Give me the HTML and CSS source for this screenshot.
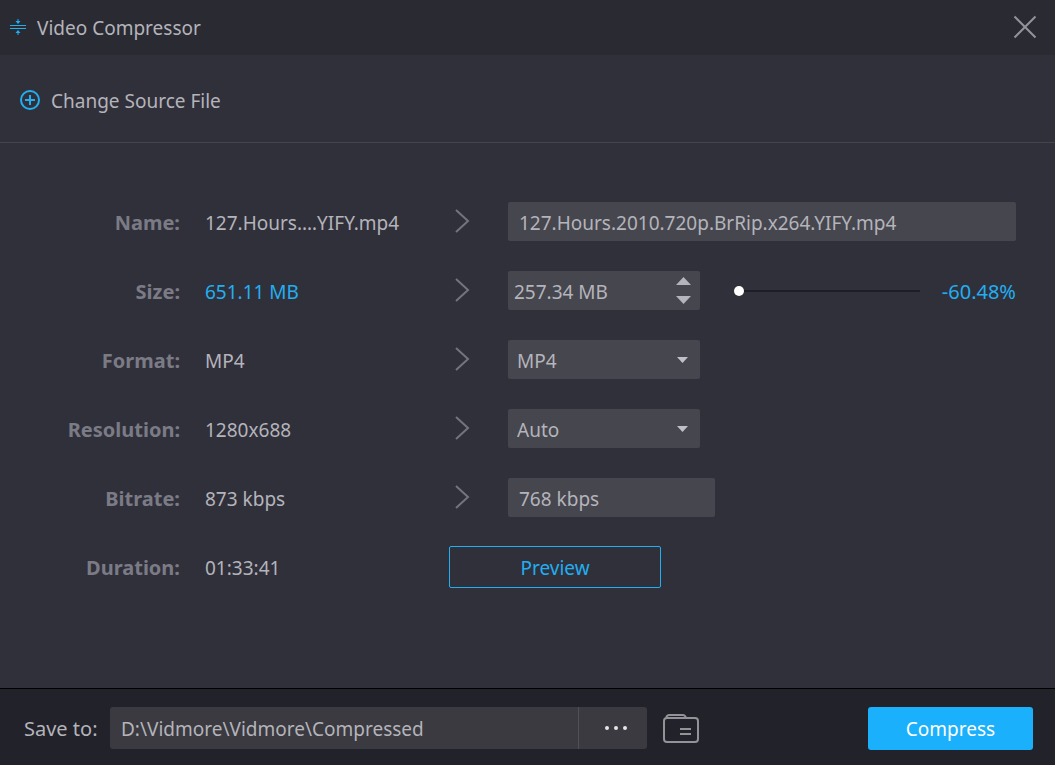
FILE: index.html
```html
<!DOCTYPE html>
<html lang="en">
<head>
    <meta charset="UTF-8">
    <meta name="viewport" content="width=device-width, initial-scale=1.0">
    <title>Video Compressor</title>
    <link rel="stylesheet" href="styles.css">
</head>
<body>
    <header class="titlebar">
        <svg class="logo" width="16" height="18" viewBox="0 0 16 18" fill="none" stroke="#22aef0">
            <path d="M0 7.5h16M0 10.500h16" />
            <path d="M8 1v4M8 17v-4" />
            <path d="M5.500 3h5L8 6zM5.500 15h5L8 12z" fill="#22aef0" stroke="none" />
        </svg>
        <h1>Video Compressor</h1>
        <button type="button" class="close" aria-label="Close">
            <svg width="24" height="24" viewBox="0 0 24 24" fill="none" stroke="#92929a" stroke-width="2">
                <path d="M1.500 1.500l21 21M22.500 1.500l-21 21" />
            </svg>
        </button>
    </header>

    <div class="toolbar">
        <button type="button" class="change-source">
            <svg width="20" height="20" viewBox="0 0 20 20" fill="none" stroke="#22aef0" stroke-width="2">
                <circle cx="10" cy="10" r="9" />
                <path d="M10 5v10M5 10h10" />
            </svg>
            <span>Change Source File</span>
        </button>
    </div>

    <form class="settings" id="compressForm">
        <label for="name">Name:</label>
        <span class="source">127.Hours.…YIFY.mp4</span>
        <svg class="arrow" width="16" height="24" viewBox="0 0 16 24"><path d="M2 1l12 11L2 23" /></svg>
        <input type="text" class="field" id="name" value="127.Hours.2010.720p.BrRip.x264.YIFY.mp4">

        <label for="size">Size:</label>
        <span class="source blue">651.11 MB</span>
        <svg class="arrow" width="16" height="24" viewBox="0 0 16 24"><path d="M2 1l12 11L2 23" /></svg>
        <div class="size-row">
            <div class="spinner">
                <input type="text" id="size" value="257.34 MB">
                <div class="spin-buttons">
                    <button type="button" aria-label="Increase size">
                        <svg width="15" height="8" viewBox="0 0 15 8"><path d="M0 8L7.500 0L15 8z" /></svg>
                    </button>
                    <button type="button" aria-label="Decrease size">
                        <svg width="15" height="8" viewBox="0 0 15 8"><path d="M0 0L7.500 8L15 0z" /></svg>
                    </button>
                </div>
            </div>
            <input type="range" class="slider" min="0" max="100" value="0" aria-label="Compression">
            <output class="blue" for="size">-60.48%</output>
        </div>

        <label for="format">Format:</label>
        <span class="source">MP4</span>
        <svg class="arrow" width="16" height="24" viewBox="0 0 16 24"><path d="M2 1l12 11L2 23" /></svg>
        <select class="field short" id="format">
            <option>MP4</option>
        </select>

        <label for="resolution">Resolution:</label>
        <span class="source">1280x688</span>
        <svg class="arrow" width="16" height="24" viewBox="0 0 16 24"><path d="M2 1l12 11L2 23" /></svg>
        <select class="field short" id="resolution">
            <option>Auto</option>
        </select>

        <label for="bitrate">Bitrate:</label>
        <span class="source">873 kbps</span>
        <svg class="arrow" width="16" height="24" viewBox="0 0 16 24"><path d="M2 1l12 11L2 23" /></svg>
        <input type="text" class="field medium" id="bitrate" value="768 kbps">

        <span class="label">Duration:</span>
        <span class="source">01:33:41</span>
        <button type="button" class="preview">Preview</button>
    </form>

    <footer class="bottom">
        <label for="saveTo">Save to:</label>
        <div class="path">
            <input type="text" id="saveTo" value="D:\Vidmore\Vidmore\Compressed">
            <button type="button" aria-label="Browse">
                <svg width="24" height="4" viewBox="0 0 24 4" fill="#e6e6e8">
                    <circle cx="3" cy="2" r="2" />
                    <circle cx="12" cy="2" r="2" />
                    <circle cx="21" cy="2" r="2" />
                </svg>
            </button>
        </div>
        <button type="button" class="folder" aria-label="Open folder">
            <svg width="36" height="29" viewBox="0 0 36 29" fill="none" stroke="#929297" stroke-width="2">
                <rect x="1" y="4" width="34" height="24" rx="3" />
                <path d="M3 4l1-2q.5-1 2-1h14q2 0 3 3M17 15h11M17 20h11" />
            </svg>
        </button>
        <button type="submit" form="compressForm" class="compress">Compress</button>
    </footer>
</body>
</html>
```
FILE: styles.css
```css
* {
    box-sizing: border-box;
}
body {
    margin: 0;
    min-height: 100vh;
    display: flex;
    flex-direction: column;
    background-color: #30303b;
    color: #b4b4ba;
    font-family: Tahoma, "Noto Sans", sans-serif;
    font-size: 19px;
    line-height: 28px;
}
button, input, select, output {
    font: inherit;
    color: inherit;
}
button {
    display: flex;
    align-items: center;
    justify-content: center;
    padding: 0;
    border: none;
    background: none;
    cursor: pointer;
}
input {
    min-width: 0;
    border: none;
    background: none;
}
svg {
    display: block;
    flex-shrink: 0;
}
.blue {
    color: #22aef0;
}

.titlebar {
    display: flex;
    align-items: center;
    gap: 11px;
    height: 55px;
    padding: 0 18px 2px 10px;
    background-color: #2a2a33;
}
.titlebar h1 {
    margin: 0;
    padding-top: 2px;
    font-size: 19px;
    font-weight: normal;
}
.close {
    margin-left: auto;
}

.toolbar {
    display: flex;
    align-items: center;
    height: 88px;
    padding: 2px 20px 0;
    border-bottom: 1px solid #45454e;
}
.change-source {
    gap: 11px;
}
.change-source span {
    padding-top: 2px;
}

.settings {
    flex: 1;
    display: grid;
    grid-template-columns: 180px 219px 34px 1fr;
    grid-auto-rows: 39px;
    align-content: start;
    align-items: center;
    gap: 30px 25px;
    padding: 59px 39px 59px 0;
}
.settings label, .label {
    padding-top: 2px;
    color: #7b7b86;
    font-size: 20px;
    font-weight: bold;
    text-align: right;
}
.source, output {
    padding-top: 2px;
    white-space: nowrap;
}
.arrow {
    justify-self: center;
    margin: 0 8px 2px 0;
    fill: none;
    stroke: #74747e;
    stroke-width: 2;
}
.field, .spinner {
    width: 100%;
    height: 39px;
    padding: 2px 11px 0;
    border: none;
    border-radius: 2px;
    background-color: #46464f;
}
.short, .spinner {
    width: 192px;
}
.medium {
    width: 207px;
}
select.field {
    appearance: none;
    padding: 2px 9px 0;
    background-image: url("data:image/svg+xml,%3Csvg xmlns='http://www.w3.org/2000/svg' width='11' height='6'%3E%3Cpath d='M0 0h11L5.5 6z' fill='%23c0c0c6'/%3E%3C/svg%3E");
    background-repeat: no-repeat;
    background-position: right 12px center;
}
.size-row {
    display: flex;
    align-items: center;
}
.spinner {
    display: flex;
    flex-shrink: 0;
    padding: 0 9px 0 6px;
}
.spinner input {
    flex: 1;
    padding: 2px 0 0;
}
.spin-buttons {
    display: flex;
    flex-direction: column;
    justify-content: center;
    gap: 11px;
    fill: #b4b4ba;
}
.slider {
    appearance: none;
    flex: 1;
    height: 10px;
    margin: 0 18px 0 34px;
}
.slider::-webkit-slider-runnable-track {
    height: 2px;
    background-color: #1e1e27;
}
.slider::-webkit-slider-thumb {
    appearance: none;
    width: 10px;
    height: 10px;
    margin-top: -4px;
    border-radius: 50%;
    background-color: #fff;
}
output {
    min-width: 78px;
    font-size: 20px;
    text-align: right;
}
.preview {
    grid-column: 3 / 5;
    width: 212px;
    height: 42px;
    padding-top: 2px;
    border: 1px solid #22aef0;
    border-radius: 2px;
    color: #22aef0;
}

.bottom {
    display: flex;
    align-items: center;
    height: 77px;
    padding: 2px 22px 0 24px;
    border-top: 1px solid #000;
    background-color: #22222a;
}
.bottom label {
    min-width: 74px;
    padding-top: 2px;
    font-size: 20px;
}
.path {
    flex: 0 1 537px;
    display: flex;
    height: 42px;
    margin: 0 16px 0 12px;
    border-radius: 3px;
    background-color: #3a3a40;
}
.path input {
    flex: 1;
    padding: 2px 11px 0;
}
.path button {
    width: 69px;
    padding-left: 5px;
    border-left: 1px solid #505056;
}
.compress {
    width: 165px;
    height: 43px;
    padding-top: 2px;
    margin-left: auto;
    border-radius: 3px;
    background-color: #1ab0fb;
    color: #fff;
}
```
